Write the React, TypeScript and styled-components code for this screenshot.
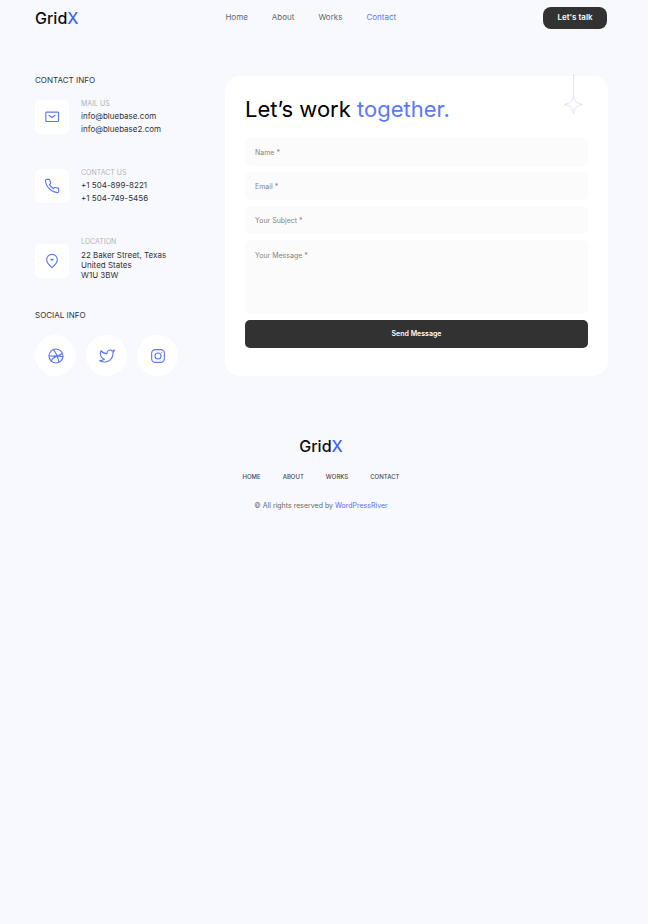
import React from "react";
import styled, { createGlobalStyle } from "styled-components";

const GlobalStyle = createGlobalStyle`
  *, *::before, *::after { box-sizing: border-box; }
  html { background: #f8f9fe; }
  body {
    margin: 0;
    background: #f8f9fe;
    color: #323232;
    font-family: Inter, "Liberation Sans", sans-serif;
    font-size: 8px;
    font-weight: 400;
  }
  h1, h2, h3, p, ul { margin: 0; padding: 0; font-weight: inherit; }
  ul { list-style: none; }
  a { color: inherit; text-decoration: none; }
`;

const Page = styled.div`
  padding: 7px 40px 0 35px;
`;

const Header = styled.header`
  display: flex;
  align-items: center;
  justify-content: space-between;
  height: 22px;
  padding-right: 1px;
`;

const Logo = styled.a`
  display: block;
  color: #0d0d0d;
  font-size: 16px;
  font-weight: 500;
  line-height: 22px;

  span { color: #4361ee; }
`;

const NavList = styled.ul`
  display: flex;
  gap: 24px;
  padding-bottom: 2px;
`;

const NavLink = styled.a<{ $active?: boolean }>`
  display: block;
  color: ${(p) => (p.$active ? "#5b78f6" : "#666666")};
  font-size: 8px;
  line-height: 20px;
`;

const Button = styled.button<{ $wide?: boolean }>`
  display: block;
  width: ${(p) => (p.$wide ? "100%" : "64px")};
  height: ${(p) => (p.$wide ? "28px" : "22px")};
  padding: ${(p) => (p.$wide ? "0" : "0 0 2px")};
  border: 0;
  border-radius: ${(p) => (p.$wide ? "5px" : "8px")};
  background: #323232;
  color: #ffffff;
  font-family: inherit;
  font-size: ${(p) => (p.$wide ? "7px" : "8px")};
  font-weight: 600;
  line-height: 20px;
  cursor: pointer;
`;

const Main = styled.main`
  display: grid;
  grid-template-columns: 190px 1fr;
  margin-top: 47px;
`;

const Sidebar = styled.aside`
  display: flex;
  flex-direction: column;
`;

const SideHeading = styled.h2`
  color: #323232;
  font-size: 8px;
  line-height: 9px;
`;

const InfoList = styled.ul`
  display: flex;
  flex-direction: column;
  gap: 30px;
  margin: 12px 0 24px;
`;

const InfoItem = styled.li`
  display: flex;
  align-items: center;
  gap: 12px;
`;

const IconBox = styled.span`
  display: grid;
  place-items: center;
  width: 34px;
  height: 34px;
  border-radius: 5px;
  background: #ffffff;
  color: #5b78f6;
`;

const InfoLabel = styled.h3`
  color: #b4b4b4;
  font-size: 7px;
  line-height: 13px;
`;

const InfoLine = styled.a`
  display: block;
  font-size: 8px;
  line-height: 13px;
`;

const Address = styled.address`
  margin: 2px 0 7px;
  font-size: 8px;
  font-style: normal;
  line-height: 10px;
`;

const SocialList = styled.ul`
  display: flex;
  gap: 10px;
  margin-top: 15px;
`;

const SocialLink = styled.a`
  display: grid;
  place-items: center;
  width: 41px;
  height: 41px;
  border-radius: 50%;
  background: #ffffff;
  color: #5b78f6;
`;

const Card = styled.section`
  position: relative;
  padding: 20px 20px 28px;
  border-radius: 15px;
  background: #ffffff;
`;

const Ornament = styled.svg`
  position: absolute;
  top: -2px;
  right: 24px;
`;

const Title = styled.h1`
  color: #000000;
  font-size: 22px;
  line-height: 27px;

  span { color: #5b78f6; }
`;

const Form = styled.form`
  display: flex;
  flex-direction: column;
  gap: 6px;
  margin-top: 15px;
`;

const Field = styled.input`
  display: block;
  width: 100%;
  height: 28px;
  padding: 0 10px;
  border: 0;
  border-radius: 5px;
  background: #fbfbfb;
  color: #323232;
  font-family: inherit;
  font-size: 7px;
  line-height: 12px;

  &::placeholder { color: #858585; opacity: 1; }
`;

const MessageField = styled(Field).attrs({ as: "textarea" })`
  height: 74px;
  padding: 10px;
  resize: none;
`;

const Footer = styled.footer`
  display: flex;
  flex-direction: column;
  align-items: center;
  padding: 59px 1px 20px 0;
`;

const FooterLinks = styled.ul`
  display: flex;
  gap: 22px;
  margin-top: 15px;

  a {
    display: block;
    color: #4a4a4a;
    font-size: 6px;
    font-weight: 500;
    line-height: 10px;
  }
`;

const Copyright = styled.p`
  margin-top: 18px;
  color: #666666;
  font-size: 7px;
  line-height: 12px;

  a { color: #5b6cf6; }
`;

const Icon = ({ size, children }: { size: number; children: React.ReactNode }) => (
  <svg
    width={size}
    height={size}
    viewBox="0 0 24 24"
    fill="none"
    stroke="currentColor"
    strokeWidth="1.7"
    strokeLinecap="round"
    strokeLinejoin="round"
    aria-hidden="true"
  >
    {children}
  </svg>
);

const MailIcon = () => (
  <Icon size={16}>
    <rect x="2.7" y="4.6" width="19" height="14.2" rx="1" />
    <path d="M7.5 9.3l4.500 3.400 4.500-3.400" />
  </Icon>
);

const PhoneIcon = () => (
  <Icon size={16}>
    <path d="M22 16.92v3a2 2 0 0 1-2.18 2 19.79 19.79 0 0 1-8.63-3.07 19.5 19.5 0 0 1-6-6 19.79 19.79 0 0 1-3.07-8.67A2 2 0 0 1 4.11 2h3a2 2 0 0 1 2 1.72c.13.96.36 1.9.7 2.81a2 2 0 0 1-.45 2.11L8.09 9.91a16 16 0 0 0 6 6l1.27-1.27a2 2 0 0 1 2.11-.45c.91.34 1.85.57 2.81.7A2 2 0 0 1 22 16.92z" />
  </Icon>
);

const PinIcon = () => (
  <Icon size={16}>
    <path d="M12 22c-3-2.6-8-7.1-8-11.9a8 8 0 0 1 16 0C20 14.900 15 19.400 12 22z" />
    <path d="M10.800 10h2.400" strokeWidth="2.400" />
  </Icon>
);

const DribbbleIcon = () => (
  <Icon size={16}>
    <circle cx="12" cy="12" r="10.500" />
    <path d="M8.200 2.400c4.600 5.700 6.600 11 8.100 18.500M21.600 8.200c-5.300 4.300-11.700 4.700-20 3.500M4.800 19.600c3.400-6.600 9.700-8.800 17.600-6.500" />
  </Icon>
);

const TwitterIcon = () => (
  <Icon size={16}>
    <path d="M23 3a10.900 10.900 0 0 1-3.140 1.530 4.480 4.480 0 0 0-7.860 3v1A10.660 10.660 0 0 1 3 4s-4 9 5 13a11.640 11.640 0 0 1-7 2c9 5 20 0 20-11.500a4.500 4.500 0 0 0-.080-.830A7.720 7.720 0 0 0 23 3z" />
  </Icon>
);

const InstagramIcon = () => (
  <Icon size={16}>
    <rect x="2.500" y="2.500" width="19" height="19" rx="5.500" />
    <circle cx="12" cy="12" r="4.500" />
    <path d="M17.500 6.500h.01" />
  </Icon>
);

const Brand = () => (
  <Logo href="#home">
    Grid<span>X</span>
  </Logo>
);

const navItems = ["Home", "About", "Works", "Contact"];

const fields = [
  { name: "name", type: "text", label: "Name *" },
  { name: "email", type: "email", label: "Email *" },
  { name: "subject", type: "text", label: "Your Subject *" },
];

const socials = [
  { name: "Dribbble", icon: <DribbbleIcon /> },
  { name: "Twitter", icon: <TwitterIcon /> },
  { name: "Instagram", icon: <InstagramIcon /> },
];

export default function App() {
  return (
    <Page>
      <GlobalStyle />
      <Header>
        <Brand />
        <nav aria-label="Primary">
          <NavList>
            {navItems.map((item) => (
              <li key={item}>
                <NavLink href={`#${item.toLowerCase()}`} $active={item === "Contact"}>
                  {item}
                </NavLink>
              </li>
            ))}
          </NavList>
        </nav>
        <Button type="button">Let's talk</Button>
      </Header>

      <Main>
        <Sidebar>
          <SideHeading>CONTACT INFO</SideHeading>
          <InfoList>
            <InfoItem>
              <IconBox><MailIcon /></IconBox>
              <div>
                <InfoLabel>MAIL US</InfoLabel>
                <InfoLine href="mailto:info@bluebase.com">info@bluebase.com</InfoLine>
                <InfoLine href="mailto:info@bluebase2.com">info@bluebase2.com</InfoLine>
              </div>
            </InfoItem>
            <InfoItem>
              <IconBox><PhoneIcon /></IconBox>
              <div>
                <InfoLabel>CONTACT US</InfoLabel>
                <InfoLine href="tel:+15048998221">+1 504-899-8221</InfoLine>
                <InfoLine href="tel:+15047495456">+1 504-749-5456</InfoLine>
              </div>
            </InfoItem>
            <InfoItem>
              <IconBox><PinIcon /></IconBox>
              <div>
                <InfoLabel>LOCATION</InfoLabel>
                <Address>
                  22 Baker Street, Texas<br />
                  United States<br />
                  W1U 3BW
                </Address>
              </div>
            </InfoItem>
          </InfoList>
          <SideHeading>SOCIAL INFO</SideHeading>
          <SocialList>
            {socials.map((s) => (
              <li key={s.name}>
                <SocialLink href={`#${s.name.toLowerCase()}`} aria-label={s.name}>
                  {s.icon}
                </SocialLink>
              </li>
            ))}
          </SocialList>
        </Sidebar>

        <Card>
          <Ornament width="22" height="42" viewBox="0 0 22 42" fill="none" stroke="#dfe3f1" aria-hidden="true">
            <path d="M11.500 0v22" />
            <path d="M11.500 22C12.500 27 14.500 29.500 21 30.500C14.500 31.500 12.500 34 11.500 40C10.500 34 8.500 31.500 2 30.500C8.500 29.500 10.500 27 11.500 22z" />
          </Ornament>
          <Title>
            Let’s work <span>together.</span>
          </Title>
          <Form onSubmit={(e) => e.preventDefault()}>
            {fields.map((f) => (
              <Field key={f.name} name={f.name} type={f.type} placeholder={f.label} aria-label={f.label} />
            ))}
            <MessageField name="message" placeholder="Your Message *" aria-label="Your Message *" />
            <Button type="submit" $wide>Send Message</Button>
          </Form>
        </Card>
      </Main>

      <Footer>
        <Brand />
        <nav aria-label="Footer">
          <FooterLinks>
            {navItems.map((item) => (
              <li key={item}>
                <a href={`#${item.toLowerCase()}`}>{item.toUpperCase()}</a>
              </li>
            ))}
          </FooterLinks>
        </nav>
        <Copyright>
          © All rights reserved by <a href="#wordpressriver">WordPressRiver</a>
        </Copyright>
      </Footer>
    </Page>
  );
}
